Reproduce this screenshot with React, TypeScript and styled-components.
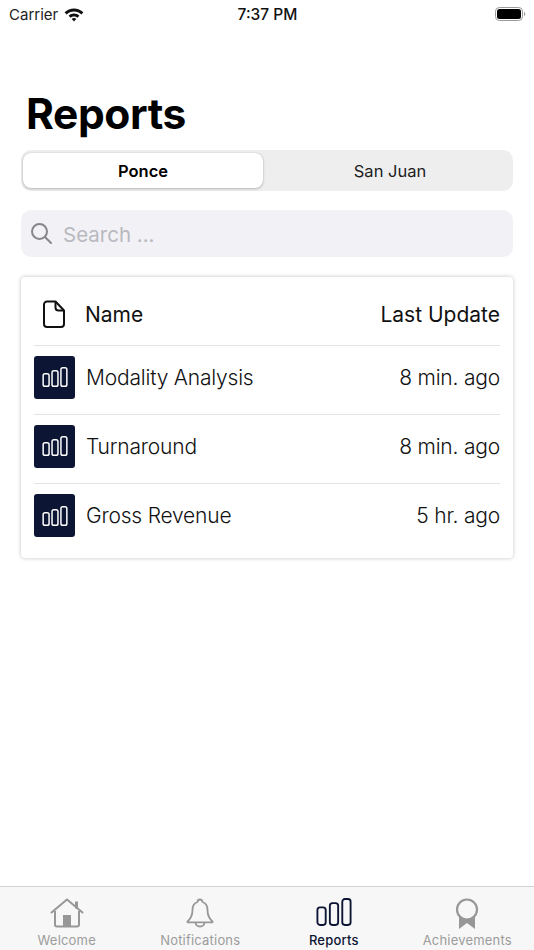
import React from "react";
import styled, { createGlobalStyle } from "styled-components";

const Global = createGlobalStyle`
  html, body { margin: 0; padding: 0; background: #fff; }
  body { font-family: Inter, "Liberation Sans", sans-serif; color: #000; }
  * { box-sizing: border-box; }
`;

const Page = styled.div`
  width: 534px;
  height: 950px;
  display: flex;
  flex-direction: column;
  overflow: hidden;
  background: #fff;
`;

const StatusBar = styled.div`
  height: 28px;
  display: grid;
  grid-template-columns: 1fr auto 1fr;
  align-items: center;
  padding: 0 8px 0 9px;
  font-size: 15px;
  font-weight: 400;
`;
const StatusLeft = styled.div`
  display: flex;
  align-items: center;
  gap: 6px;
  color: #222;
`;
const StatusTime = styled.div`
  font-size: 15.5px;
  font-weight: 500;
  color: #111;
`;
const StatusRight = styled.div`
  display: flex;
  justify-content: flex-end;
`;

const Title = styled.h1`
  margin: 59px 0 0 26px;
  height: 63px;
  font-size: 42.5px;
  line-height: 54px;
  font-weight: 700;
  letter-spacing: -0.4px;
`;

const Segmented = styled.div`
  margin: 0 21px;
  height: 41px;
  padding: 3px 2px;
  display: grid;
  grid-template-columns: 240px 1fr;
  background: #eeeeef;
  border-radius: 10px;
`;
const Segment = styled.div<{ $active?: boolean }>`
  display: flex;
  align-items: center;
  justify-content: center;
  padding-left: ${(p) => (p.$active ? "0" : "6px")};
  font-size: 16.5px;
  font-weight: ${(p) => (p.$active ? 600 : 400)};
  color: ${(p) => (p.$active ? "#000" : "#1c1c1e")};
  background: ${(p) => (p.$active ? "#fff" : "transparent")};
  border-radius: 8px;
  box-shadow: ${(p) => (p.$active ? "0 1px 3px rgba(0,0,0,.22), 0 0 1px rgba(0,0,0,.2)" : "none")};
`;

const Search = styled.div`
  margin: 19px 21px 0;
  height: 47px;
  display: flex;
  align-items: center;
  gap: 10px;
  padding: 0 0 0 9px;
  background: #f1f1f6;
  border-radius: 10px;
`;
const Placeholder = styled.span`
  padding-top: 2px;
  font-size: 20.5px;
  color: #b9b9bf;
`;

const Card = styled.div`
  margin: 20px 21px 0;
  height: 281px;
  padding: 0 13px;
  background: #fff;
  border-radius: 4px;
  box-shadow: 0 0 4px rgba(0, 0, 0, 0.24);
`;
const HeaderRow = styled.div`
  height: 69px;
  padding-top: 6px;
  display: flex;
  align-items: center;
  justify-content: space-between;
  font-size: 21px;
  font-weight: 400;
  color: #111;
  border-bottom: 1px solid #e4e4e6;
`;
const HeaderName = styled.div`
  display: flex;
  align-items: center;
  gap: 20px;
  padding-left: 9px;
`;
const Row = styled.div<{ $last?: boolean }>`
  height: 69px;
  padding-bottom: 6px;
  display: flex;
  align-items: center;
  justify-content: space-between;
  font-size: 21px;
  font-weight: 300;
  letter-spacing: -0.2px;
  color: #111;
  border-bottom: ${(p) => (p.$last ? "none" : "1px solid #e4e4e6")};
`;
const RowName = styled.div`
  display: flex;
  align-items: center;
  gap: 11px;
`;
const Thumb = styled.div`
  width: 41px;
  height: 43px;
  display: flex;
  align-items: center;
  justify-content: center;
  background: #0c1533;
  border-radius: 3px;
`;

const Spacer = styled.div`
  flex: 1;
`;

const TabBar = styled.nav`
  height: 64px;
  display: grid;
  grid-template-columns: repeat(4, 1fr);
  background: #f7f7f7;
  border-top: 1px solid #d2d2d4;
`;
const Tab = styled.div<{ $active?: boolean }>`
  display: flex;
  flex-direction: column;
  align-items: center;
  padding-top: 11px;
  font-size: 13px;
  line-height: 16px;
  font-weight: ${(p) => (p.$active ? 500 : 400)};
  letter-spacing: 0.2px;
  color: ${(p) => (p.$active ? "#0c1533" : "#9c9c9c")};
`;
const TabIcon = styled.div`
  height: 34px;
  display: flex;
  align-items: flex-start;
  justify-content: center;
`;

const Wifi = () => (
  <svg width="20" height="15" viewBox="0 0 20 15">
    <path d="M10 1.500C6.400 1.500 3.200 2.900.6 5.300l2 2.100C4.600 5.500 7.200 4.400 10 4.400s5.400 1.100 7.400 3l2-2.100C16.800 2.900 13.600 1.500 10 1.500z" fill="#111" />
    <path d="M10 6.600c-2.100 0-4 .8-5.400 2.100l2 2.100c.9-.9 2.100-1.400 3.400-1.400s2.500.5 3.400 1.400l2-2.100C14 7.400 12.100 6.600 10 6.600z" fill="#111" />
    <path d="M10 11c-.9 0-1.700.3-2.300.9L10 14.400l2.300-2.500c-.6-.6-1.400-.9-2.300-.9z" fill="#111" />
  </svg>
);

const Battery = () => (
  <svg width="31" height="14" viewBox="0 0 31 14">
    <rect x="0.5" y="0.5" width="27" height="13" rx="3.800" fill="none" stroke="#9a9a9a" />
    <rect x="2" y="2" width="24" height="10" rx="2.500" fill="#000" />
    <path d="M29 5v4c.8-.3 1.300-1.100 1.300-2S29.800 5.300 29 5z" fill="#9a9a9a" />
  </svg>
);

const SearchIcon = () => (
  <svg width="23" height="23" viewBox="0 0 23 23" fill="none" stroke="#86868b" strokeWidth="2" strokeLinecap="round">
    <circle cx="9.500" cy="9.500" r="7.500" />
    <path d="M15 15l6 6" />
  </svg>
);

const FileIcon = () => (
  <svg width="22" height="28" viewBox="0 0 22 28" fill="none" stroke="#111" strokeWidth="2" strokeLinejoin="round">
    <path d="M4 1.500h8.500L21 10.500V24a3 3 0 0 1-3 3H4a3 3 0 0 1-3-3V4.500a3 3 0 0 1 3-3z" />
    <path d="M12.500 1.500V7.500a3 3 0 0 0 3 3H21" />
  </svg>
);

const Bars = ({ color, w, h, sw }: { color: string; w: number; h: number; sw: number }) => (
  <svg width={w} height={h} viewBox="0 0 34 27" fill="none" stroke={color} strokeWidth={sw}>
    <rect x="1" y="9" width="8" height="17" rx="2.500" />
    <rect x="13" y="5" width="8" height="21" rx="2.500" />
    <rect x="25" y="1" width="8" height="25" rx="2.500" />
  </svg>
);

const HomeIcon = () => (
  <svg width="34" height="30" viewBox="0 0 34 30">
    <path d="M1.500 14.500 17 1.500l15.500 13" fill="none" stroke="#979797" strokeWidth="2" strokeLinejoin="round" strokeLinecap="round" />
    <path d="M5 13v13.500a2 2 0 0 0 2 2h20a2 2 0 0 0 2-2V13" fill="none" stroke="#979797" strokeWidth="2" />
    <rect x="13" y="17" width="8" height="11" fill="#979797" />
    <rect x="25" y="3.500" width="3" height="7" fill="#979797" />
  </svg>
);

const BellIcon = () => (
  <svg width="28" height="30" viewBox="0 0 28 30" fill="none" stroke="#979797" strokeWidth="1.800" strokeLinejoin="round">
    <path d="M14 1.500c-1.500 0-2.500 1-2.500 2.500C8 5 6.500 8 6.500 12c0 5-1 8-5 11.500v.8h25v-.8c-4-3.500-5-6.500-5-11.500 0-4-1.500-7-5-8 0-1.500-1-2.500-2.500-2.500z" />
    <path d="M9.500 24.500c.3 2.500 2.200 4 4.500 4s4.200-1.500 4.500-4" />
  </svg>
);

const AwardIcon = () => (
  <svg width="24" height="32" viewBox="0 0 24 32">
    <path d="M4 17v14l8-6 8 6V17z" fill="#979797" />
    <circle cx="12" cy="11.500" r="10" fill="#f7f7f7" stroke="#979797" strokeWidth="2.200" />
  </svg>
);

const rows = [
  { name: "Modality Analysis", time: "8 min. ago" },
  { name: "Turnaround", time: "8 min. ago" },
  { name: "Gross Revenue", time: "5 hr. ago" },
];

const tabs = [
  { label: "Welcome", icon: <HomeIcon /> },
  { label: "Notifications", icon: <BellIcon /> },
  { label: "Reports", icon: <Bars color="#0c1533" w={36} h={28} sw={1.8} />, active: true },
  { label: "Achievements", icon: <AwardIcon /> },
];

export default function App() {
  return (
    <Page>
      <Global />
      <StatusBar>
        <StatusLeft>
          Carrier <Wifi />
        </StatusLeft>
        <StatusTime>7:37 PM</StatusTime>
        <StatusRight>
          <Battery />
        </StatusRight>
      </StatusBar>
      <Title>Reports</Title>
      <Segmented>
        <Segment $active>Ponce</Segment>
        <Segment>San Juan</Segment>
      </Segmented>
      <Search>
        <SearchIcon />
        <Placeholder>Search ...</Placeholder>
      </Search>
      <Card>
        <HeaderRow>
          <HeaderName>
            <FileIcon />
            Name
          </HeaderName>
          <span>Last Update</span>
        </HeaderRow>
        {rows.map((r, i) => (
          <Row key={r.name} $last={i === rows.length - 1}>
            <RowName>
              <Thumb>
                <Bars color="#fff" w={26} h={20} sw={2} />
              </Thumb>
              {r.name}
            </RowName>
            <span>{r.time}</span>
          </Row>
        ))}
      </Card>
      <Spacer />
      <TabBar>
        {tabs.map((t) => (
          <Tab key={t.label} $active={t.active}>
            <TabIcon>{t.icon}</TabIcon>
            {t.label}
          </Tab>
        ))}
      </TabBar>
    </Page>
  );
}
